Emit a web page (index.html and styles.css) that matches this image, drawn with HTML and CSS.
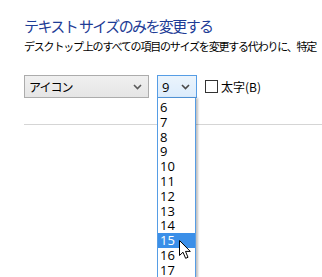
FILE: index.html
```html
<!DOCTYPE html>
<html lang="ja">
<head>
  <meta charset="UTF-8">
  <title>テキスト サイズのみを変更する</title>
  <link rel="stylesheet" href="styles.css">
</head>
<body>
  <div id="panel">
    <h2 class="title">テキスト サイズのみを変更する</h2>
    <p class="desc">デスクトップ上のすべての項目のサイズを変更する代わりに、特定</p>

    <div class="controls">
      <div class="combo item-combo">
        <span class="combo-text">アイコン</span>
        <svg class="chevron" width="9" height="6" viewBox="0 0 9 6"><path d="M1 1 L4.5 4.5 L8 1" fill="none" stroke="#5a5a5a" stroke-width="1.6"/></svg>
      </div>

      <div class="size-wrap">
        <div class="combo size-combo">
          <span class="combo-text num">9</span>
          <svg class="chevron" width="9" height="6" viewBox="0 0 9 6"><path d="M1 1 L4.5 4.5 L8 1" fill="none" stroke="#4a4a4a" stroke-width="1.6"/></svg>
        </div>
        <ul class="size-list">
          <li>6</li>
          <li>7</li>
          <li>8</li>
          <li>9</li>
          <li>10</li>
          <li>11</li>
          <li>12</li>
          <li>13</li>
          <li>14</li>
          <li class="selected">15</li>
          <li>16</li>
          <li>17</li>
        </ul>
        <!-- mouse pointer -->
        <svg class="cursor" width="13" height="20" viewBox="0 0 13 20">
          <path d="M0.5 0.5 L0.5 15.5 L4 12.2 L6.6 18.3 L9 17.3 L6.5 11.4 L11.3 11.4 Z" fill="#fff" stroke="#000" stroke-width="1" stroke-linejoin="round"/>
        </svg>
      </div>

      <label class="bold-check">
        <span class="box"></span>
        <span>太字(B)</span>
      </label>
    </div>

    <div class="divider"></div>
  </div>
</body>
</html>
```

FILE: styles.css
```css
html, body {
  height: 100%;
}
body {
  margin: 0;
  background: #fff;
  font-family: "Noto Sans CJK JP", "Noto Sans", sans-serif;
  color: #000;
}
#panel {
  box-sizing: border-box;
  min-height: 277px;
  padding: 14px 0 0 24px;
}
.title {
  margin: 0;
  font-size: 15px;
  font-weight: normal;
  letter-spacing: -1.6px;
  line-height: 24px;
  color: #1e3c96;
}
.desc {
  margin: 0;
  font-size: 11px;
  letter-spacing: -1.2px;
  line-height: 16px;
  white-space: nowrap;
}
.controls {
  display: flex;
  align-items: center;
  gap: 8px;
  margin-top: 21px;
}
.combo {
  box-sizing: border-box;
  height: 23px;
  display: flex;
  align-items: center;
  justify-content: space-between;
  padding: 0 6px 0 4px;
  border: 1px solid #acacac;
  background: linear-gradient(#f0f0f0, #e5e5e5);
  font-size: 12px;
}
.item-combo {
  width: 125px;
  letter-spacing: -1px;
}
.size-wrap {
  position: relative;
}
.size-combo {
  width: 40px;
  border-color: #569de5;
  background: linear-gradient(#ebf4fc, #dcecfc);
}
.num {
  font-family: "Open Sans", "Noto Sans", sans-serif;
  font-size: 13px;
}
.size-list {
  position: absolute;
  top: 23px;
  left: 0;
  z-index: 2;
  box-sizing: border-box;
  width: 39px;
  height: 180px;
  overflow: hidden;
  margin: 0;
  padding: 2px 0 0 0;
  list-style: none;
  background: #fff;
  border: 1px solid #569de5;
  border-top: none;
  box-shadow: 2px 0 2px rgba(0,0,0,0.25);
  font-family: "Open Sans", "Noto Sans", sans-serif;
  font-size: 13px;
}
.size-list li {
  height: 14.8px;
  line-height: 14.8px;
  padding-left: 2px;
}
.size-list .selected {
  background: #3b8fe8;
  color: #fff;
}
.cursor {
  position: absolute;
  z-index: 3;
  left: 22px;
  top: 165px;
}
.bold-check {
  display: flex;
  align-items: center;
  gap: 3px;
  font-size: 12px;
}
.box {
  box-sizing: border-box;
  width: 13px;
  height: 13px;
  border: 1px solid #333;
  background: #fff;
}
.divider {
  margin-top: 26px;
  height: 1px;
  background: #d5d5d5;
}
```
